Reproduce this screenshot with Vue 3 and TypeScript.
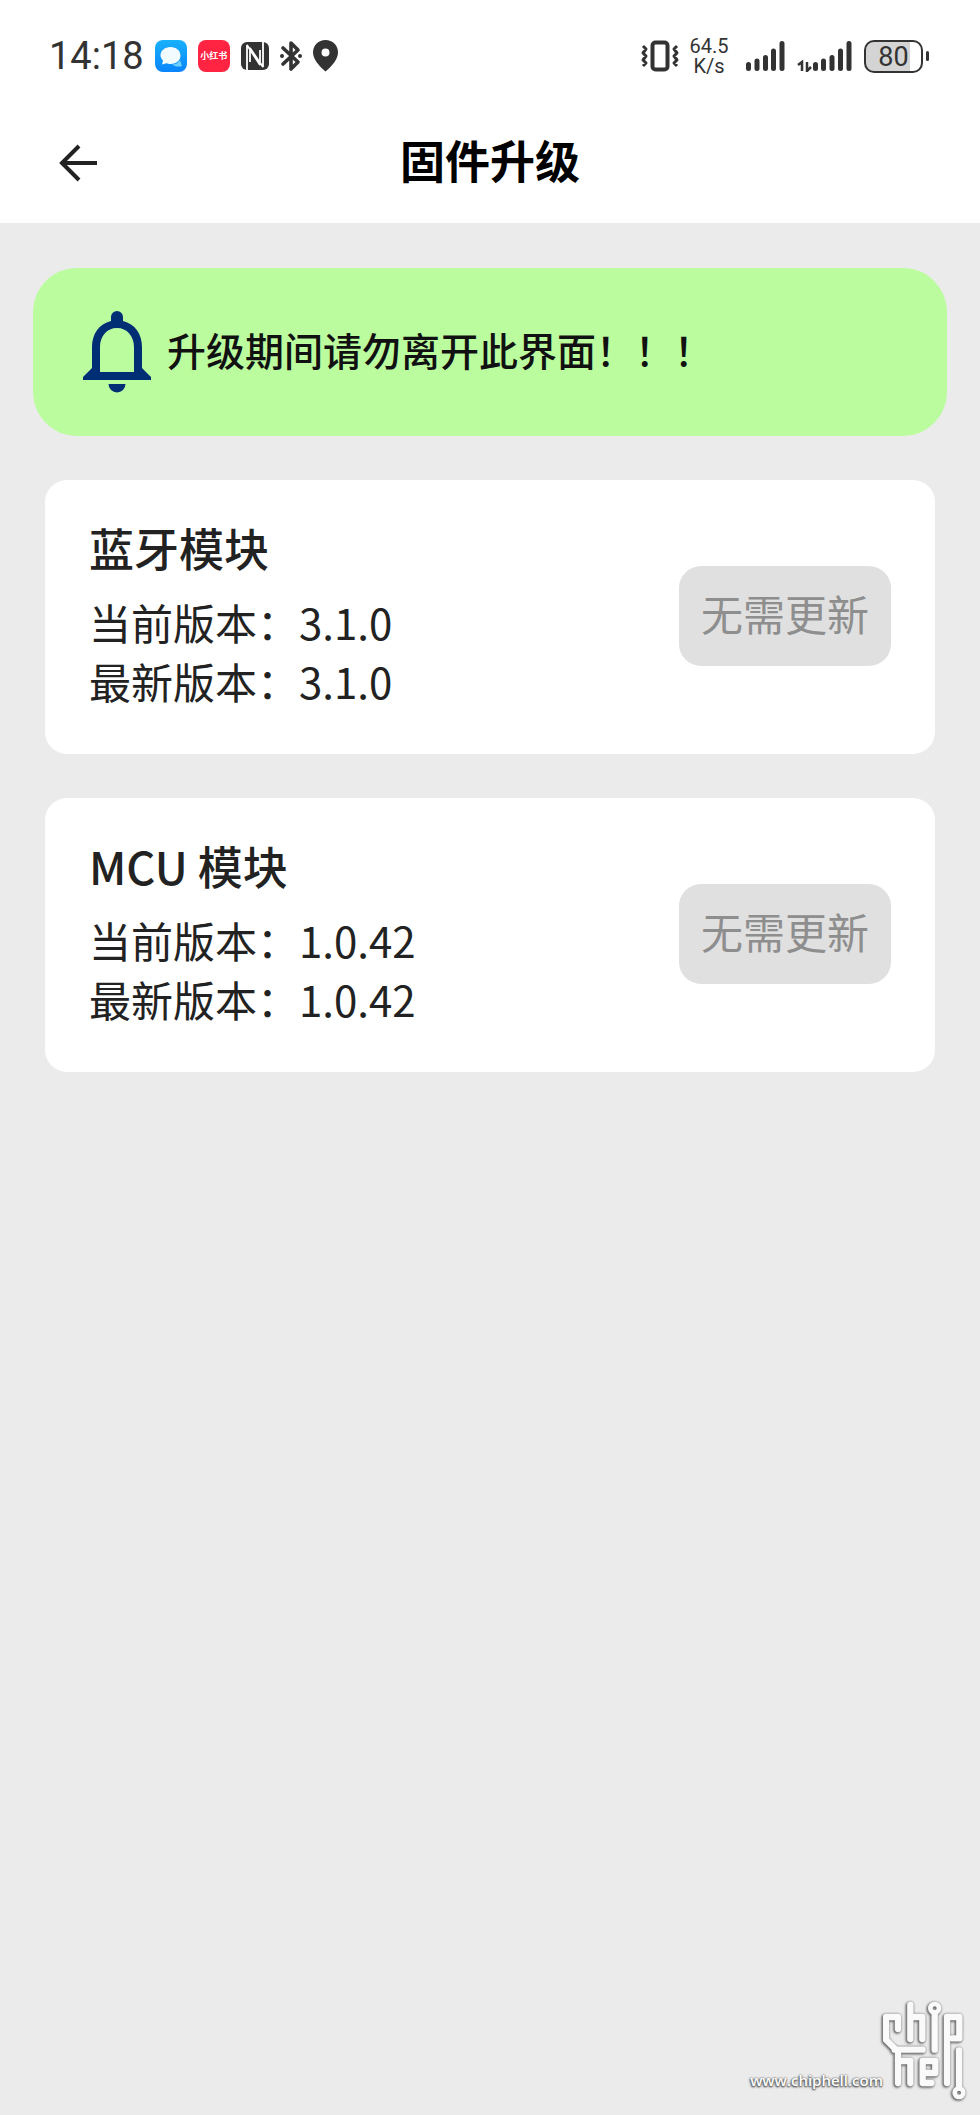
<script setup lang="ts">
interface FirmwareModule {
  name: string
  current: string
  latest: string
}

const modules: FirmwareModule[] = [
  { name: '蓝牙模块', current: '3.1.0', latest: '3.1.0' },
  { name: 'MCU 模块', current: '1.0.42', latest: '1.0.42' },
]
</script>

<template>
  <div class="screen">
    <header class="top">
      <div class="status">
        <div class="status-left">
          <span class="clock">14:18</span>
          <svg class="app-icon" viewBox="0 0 32 32" aria-hidden="true">
            <defs>
              <linearGradient id="msg" x1="0" y1="0" x2="0" y2="1">
                <stop offset="0" stop-color="#17b1fb" />
                <stop offset="1" stop-color="#0a84fb" />
              </linearGradient>
            </defs>
            <rect width="32" height="32" rx="8" fill="url(#msg)" />
            <path d="M17 24c4 1 6-1 8-4l2 6c-3 1-7 1-10-2z" fill="#6fd0fb" />
            <path d="M15.500 7C21 7 25.500 10.500 25.500 15.500S21 24 15.500 24c-1.500 0-3-.3-4-.8L7 24.500l1-4C6.500 19 5.500 17.300 5.500 15.500 5.500 10.500 10 7 15.500 7z" fill="#f2fbff" />
          </svg>
          <span class="red-app">小红书</span>
          <svg class="nfc" viewBox="0 0 28 28" aria-hidden="true">
            <rect width="28" height="28" rx="6" fill="#333" />
            <path d="M6 28V3L19 23V8M22 0v25L9 6v14" fill="none" stroke="#fff" stroke-width="1.800" stroke-linejoin="bevel" />
          </svg>
          <svg class="bt" viewBox="0 0 22 32" aria-hidden="true">
            <path d="M3 8l15 14-7 7V3l7 7L3 24" fill="none" stroke="#333" stroke-width="3.600" stroke-linejoin="round" stroke-linecap="round" />
            <circle cx="2" cy="16" r="2" fill="#333" /><circle cx="20" cy="16" r="2" fill="#333" />
          </svg>
          <svg class="pin" viewBox="0 0 25 32" aria-hidden="true">
            <path fill-rule="evenodd" d="M12.500 0C19.500 0 25 5.400 25 12.300c0 7-5.500 13.200-12.500 19.200C5.500 25.500 0 19.300 0 12.300 0 5.400 5.500 0 12.500 0zm0 8.500a4 4 0 100 8 4 4 0 000-8z" fill="#333" />
          </svg>
        </div>
        <div class="status-right">
          <svg class="vibrate" viewBox="0 0 38 32" aria-hidden="true">
            <rect x="11.500" y="2.500" width="15" height="27" rx="3" fill="none" stroke="#333" stroke-width="4" />
            <path d="M2 6l3 3-3 4 3 3-3 4 3 3-3 3M36 6l-3 3 3 4-3 3 3 4-3 3 3 3" fill="none" stroke="#333" stroke-width="3" stroke-linejoin="round" />
          </svg>
          <span class="speed"><span>64.5</span><span>K/s</span></span>
          <svg class="signal" viewBox="0 0 47 32" aria-hidden="true">
            <path d="M9.500 24.500v4M18 21v7.500M26.500 17.500v11M34.500 11v17.500M43 3.500v25" stroke="#333" stroke-width="5" stroke-linecap="round" />
          </svg>
          <svg class="signal-data" viewBox="0 0 58 32" aria-hidden="true">
            <path d="M2 25l4-3v9M11 22v9l4-4" fill="none" stroke="#333" stroke-width="2.500" />
            <path d="M19.500 24.500v4M27.500 21v7.500M36 17.500v11M44.500 11v17.500M53 3.500v25" stroke="#333" stroke-width="5" stroke-linecap="round" />
          </svg>
          <span class="battery"><span class="level">80</span></span>
        </div>
      </div>
      <div class="title-bar">
        <button class="back" type="button" aria-label="返回">
          <svg viewBox="0 0 38 38" aria-hidden="true">
            <path d="M20 2L3 19l17 17M3 19h35" fill="none" stroke="#222" stroke-width="4" />
          </svg>
        </button>
        <h1>固件升级</h1>
      </div>
    </header>

    <main>
      <div class="notice" role="alert">
        <svg class="bell" viewBox="0 0 68 82" aria-hidden="true">
          <path fill-rule="evenodd" d="M34 0a6 6 0 016 6v4c12 3 19 13 19 26v21l9 9v3H0v-3l9-9V36C9 23 16 13 28 10V6a6 6 0 016-6zm0 17c-10 0-17 8-17 19v25h34V36c0-11-7-19-17-19z" fill="#002e75" />
          <path d="M25.500 73h17a8.500 8.500 0 01-17 0z" fill="#002e75" />
        </svg>
        <p>升级期间请勿离开此界面！！！</p>
      </div>

      <section v-for="m in modules" :key="m.name" class="card">
        <div class="info">
          <h2>{{ m.name }}</h2>
          <p>当前版本：{{ m.current }}</p>
          <p>最新版本：{{ m.latest }}</p>
        </div>
        <button class="update" type="button" disabled>无需更新</button>
      </section>
    </main>

    <footer>
      <a href="#">www.chiphell.com</a>
      <svg class="logo" viewBox="429 45 255 306" aria-hidden="true">
        <g fill="none" stroke="#fafafa" stroke-width="19" stroke-linejoin="round" stroke-linecap="round">
          <path d="M474 132V96H438V164L474 200V294M464 194H548" />
          <path d="M511 60V162M511 96H547V162" />
          <path d="M584 84V194" /><circle cx="584" cy="70" r="13" stroke-width="14" />
          <path d="M621 294V96H658V160H636" />
          <path d="M474 228H511V294" />
          <path d="M574 294H548V228H586V264H548" />
          <path d="M657 196V308" /><circle cx="657" cy="323" r="13" stroke-width="14" />
        </g>
      </svg>
    </footer>
  </div>
</template>

<style>
body {
  margin: 0;
  background: #ebebeb;
}
</style>

<style scoped>
.screen {
  min-height: 100vh;
  display: flex;
  flex-direction: column;
  background: #ebebeb;
  color: #222;
  font-family: "Noto Sans CJK SC", sans-serif;
}
h1, h2, p {
  margin: 0;
}
svg {
  display: block;
  flex: none;
}
button {
  font: inherit;
  border: 0;
}
.top {
  background: #fff;
}
.status {
  height: 112px;
  padding: 0 51px 0 49px;
  display: flex;
  align-items: center;
  justify-content: space-between;
  color: #333;
  font-family: Roboto, sans-serif;
}
.status-left {
  display: flex;
  align-items: center;
  gap: 11px;
}
.status-right {
  display: flex;
  align-items: center;
  gap: 10px;
}
.clock {
  font-size: 38px;
  line-height: 44px;
}
.app-icon {
  width: 32px;
  height: 32px;
}
.red-app {
  width: 32px;
  height: 32px;
  border-radius: 8px;
  background: #ff2442;
  color: #fff;
  font: 700 9px/32px "Noto Sans CJK SC", sans-serif;
  text-align: center;
}
.nfc {
  width: 28px;
  height: 28px;
}
.bt {
  width: 22px;
  height: 32px;
}
.pin {
  width: 25px;
  height: 32px;
}
.vibrate {
  width: 38px;
  height: 32px;
}
.speed {
  width: 40px;
  display: flex;
  flex-direction: column;
  align-items: center;
  font-size: 20px;
  line-height: 20px;
}
.signal {
  width: 47px;
  height: 32px;
}
.signal-data {
  width: 58px;
  height: 32px;
}
.battery {
  display: flex;
  align-items: center;
  gap: 3px;
}
.battery::after {
  content: "";
  width: 3px;
  height: 10px;
  border-radius: 2px;
  background: #333;
}
.level {
  box-sizing: border-box;
  width: 59px;
  height: 33px;
  border: 2px solid #333;
  border-radius: 10px;
  background: linear-gradient(90deg, #d4d4d4 80%, #fff 80%);
  font-size: 27px;
  line-height: 30px;
  text-align: center;
}
.title-bar {
  height: 111px;
  padding: 0 59px;
  display: grid;
  grid-template-columns: 1fr auto 1fr;
  align-items: start;
}
.back {
  width: 38px;
  padding: 32px 0;
  background: none;
}
.back svg {
  width: 38px;
  height: 38px;
}
h1 {
  font-size: 45px;
  line-height: 96px;
  font-weight: 700;
  color: #000;
}
main {
  padding: 45px 33px;
  display: flex;
  flex-direction: column;
  gap: 44px;
}
.notice {
  height: 168px;
  border-radius: 44px;
  background: #bbfc9f;
  padding: 0 50px;
  display: flex;
  align-items: center;
  gap: 16px;
  font-size: 39px;
  line-height: 58px;
  font-weight: 500;
  color: #111;
}
.notice p {
  padding-bottom: 6px;
}
.bell {
  width: 68px;
  height: 82px;
}
.card {
  margin: 0 12px;
  padding: 36px 44px 44px;
  border-radius: 22px;
  background: #fff;
  display: flex;
  align-items: center;
  justify-content: space-between;
}
h2 {
  margin-bottom: 12px;
  font-size: 45px;
  line-height: 64px;
  font-weight: 500;
}
.info p {
  font-size: 42px;
  line-height: 59px;
}
.update {
  width: 212px;
  height: 100px;
  margin-top: 6px;
  padding: 0 0 8px;
  border-radius: 22px;
  background: #e0e0e0;
  color: #8e8e8e;
  font-size: 42px;
}
footer {
  margin-top: auto;
  padding: 0 12px 13px;
  display: flex;
  align-items: flex-end;
  justify-content: flex-end;
}
footer a {
  padding-bottom: 10px;
  color: #fff;
  font: 600 15px/24px "Open Sans", sans-serif;
  text-decoration: none;
  text-shadow: 0 0 2px #555, 0 1px 2px #555, -1px 1px 2px #777;
}
.logo {
  width: 85px;
  height: 102px;
  filter: drop-shadow(-1px 1px 1px #666) drop-shadow(0 0 1px #888);
}
</style>
